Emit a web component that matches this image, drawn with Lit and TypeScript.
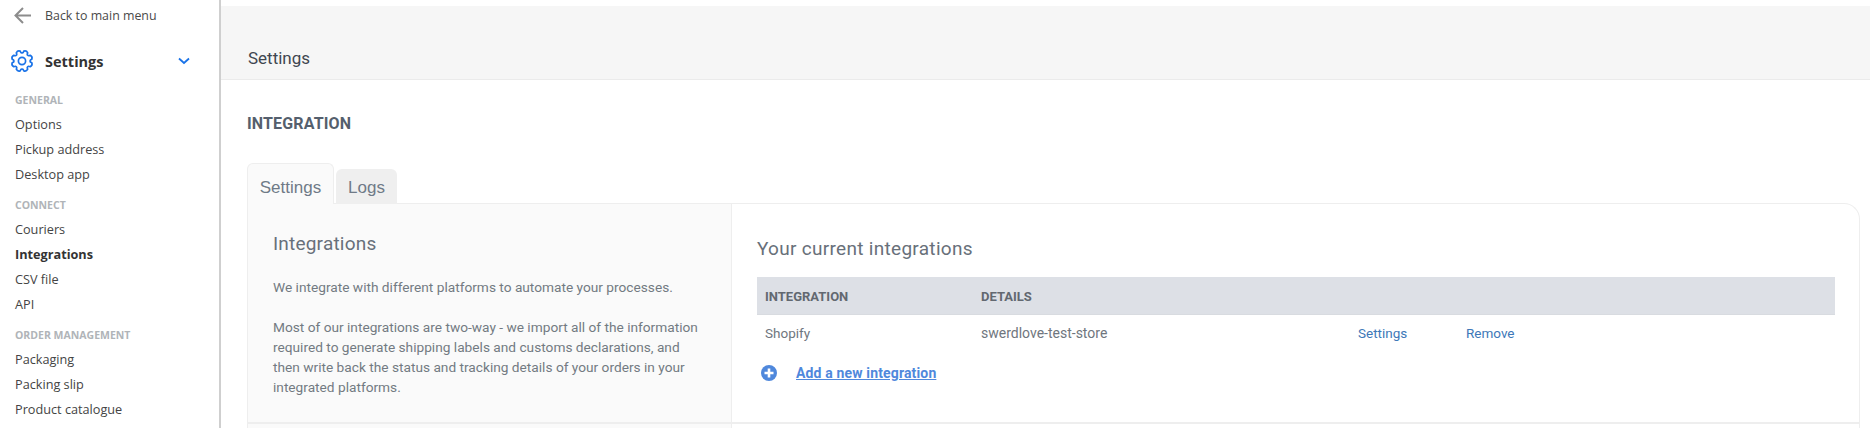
import { LitElement, html, css, svg } from "lit";
import { customElement } from "lit/decorators.js";

const groups = [
  { title: "GENERAL", items: ["Options", "Pickup address", "Desktop app"] },
  { title: "CONNECT", items: ["Couriers", "Integrations", "CSV file", "API"] },
  { title: "ORDER MANAGEMENT", items: ["Packaging", "Packing slip", "Product catalogue"] },
];

function gearPath(): string {
  const teeth = 8;
  const cx = 12, cy = 12, rOut = 11, rIn = 8.2;
  const pt = (r: number, a: number) => `${(cx + r * Math.cos(a)).toFixed(2)} ${(cy + r * Math.sin(a)).toFixed(2)}`;
  const step = (Math.PI * 2) / teeth;
  let d = "";
  for (let i = 0; i < teeth; i++) {
    const a = i * step + step / 2 - Math.PI / 2;
    const w = step * 0.27;
    const valleyStart = a - step / 2;
    if (i === 0) d += `M${pt(rIn, valleyStart)}`;
    d += ` Q${pt(rIn - 0.3, a - w * 1.2)} ${pt(rOut - 1, a - w)}`;
    d += ` Q${pt(rOut + 0.6, a)} ${pt(rOut - 1, a + w)}`;
    d += ` Q${pt(rIn - 0.3, a + w * 1.2)} ${pt(rIn, a + step / 2)}`;
  }
  return d + "Z";
}

@customElement("app-root")
export class AppRoot extends LitElement {
  static styles = css`
    :host { display: block; width: 1870px; height: 428px; overflow: hidden; background: #fff; }
    .page { display: flex; height: 428px; overflow: hidden; }
    .side { width: 219px; flex: none; border-right: 2px solid #cfcfcf; font-family: "Open Sans", "Noto Sans", sans-serif; color: #3c3c3c; box-sizing: content-box; }
    .back { display: flex; align-items: center; height: 30px; padding-left: 14px; gap: 14px; font-size: 12.4px; color: #4a4a4a; }
    .head { display: flex; align-items: center; height: 30px; margin-top: 16px; padding-left: 10px; font-size: 14.5px; font-weight: 700; color: #333; }
    .head span { margin-left: 11px; flex: 1; }
    .chev { margin-right: 29px; }
    .groups { padding: 16px 0 0 15px; }
    .group { margin-bottom: 10px; }
    .gt { font-size: 10.5px; font-weight: 700; color: #b0b4b8; height: 16px; line-height: 16px; margin-bottom: 4px; }
    .it { font-size: 12.7px; height: 25px; line-height: 25px; color: #444; }
    .it.on { font-weight: 700; color: #333; }
    .main { flex: 1; min-width: 0; font-family: "Roboto", sans-serif; color: #68707a; }
    .top { margin-top: 6px; height: 74px; box-sizing: border-box; background: #f6f6f6; border-bottom: 1px solid #ebebeb; padding: 41px 0 0 27px; font-size: 17px; line-height: 22px; color: #3f4650; }
    .body { padding: 34px 10px 0 26px; }
    h1 { margin: 0; font-size: 16px; line-height: 20px; font-weight: 700; color: #555f6d; letter-spacing: .15px; }
    .tabs { display: flex; align-items: flex-end; gap: 2px; margin-top: 30px; height: 40px; position: relative; z-index: 1; margin-bottom: -1px; }
    .tab { font-family: "Liberation Sans", sans-serif; font-size: 17px; color: #6f7a87; display: flex; align-items: center; justify-content: center; box-sizing: border-box; border-radius: 6px 6px 0 0; }
    .tab.a { width: 87px; height: 41px; padding-top: 7px; background: #fafafa; border: 1px solid #eeeeee; border-bottom: none; }
    .tab.b { width: 61px; height: 35px; padding-top: 2px; background: #efefef; }
    .panel { height: 240px; box-sizing: border-box; border: 1px solid #eeeeee; border-bottom: none; border-radius: 0 16px 0 0; overflow: hidden; }
    .sec { display: flex; height: 220px; box-sizing: border-box; border-bottom: 2px solid #eeeeee; }
    .sec.next { height: 20px; border-bottom: none; }
    .left { width: 484px; flex: none; box-sizing: border-box; background: #fafafa; border-right: 1px solid #eeeeee; padding: 28px 32px 0 25px; }
    h2 { margin: 0; font-size: 19px; line-height: 24px; font-weight: 400; color: #68707a; letter-spacing: .2px; }
    .left p { margin: 0; font-size: 13.7px; line-height: 20px; color: #737a82; }
    .p1 { padding-top: 21px; }
    .p2 { padding-top: 20px; }
    .right { flex: 1; min-width: 0; padding: 33px 24px 0 25px; }
    .right h2 { margin-bottom: 16px; letter-spacing: .3px; }
    .row { display: grid; grid-template-columns: 216px 377px 108px 1fr; align-items: center; padding-left: 8px; font-size: 13.5px; }
    .row.h { height: 38px; padding-top: 1px; background: #dde0e6; font-size: 13px; font-weight: 700; color: #626870; border-bottom: 1px solid #d8dbe0; box-sizing: border-box; }
    .row.d { height: 35px; color: #6f767e; }
    .details { font-size: 14px; }
    .row a { color: #3d78b8; }
    .add { display: flex; align-items: center; margin-top: 14px; padding-left: 3px; gap: 18px; }
    .add a { font-size: 14px; letter-spacing: .15px; font-weight: 700; color: #4f88dc; text-decoration: underline; }
  `;

  render() {
    return html`<div class="page">
      <nav class="side">
        <div class="back">
          <svg width="17" height="17" viewBox="0 0 17 17" fill="none" stroke="#8c8c8c" stroke-width="2">${svg`<path d="M17 8.500H1.500M9 1L1.500 8.500L9 16"/>`}</svg>
          <span>Back to main menu</span>
        </div>
        <div class="head">
          <svg width="24" height="24" viewBox="0 0 24 24" fill="none" stroke="#1a73e8" stroke-width="1.7" stroke-linejoin="round">${svg`<circle cx="12" cy="12" r="3.6"/><path d=${gearPath()}/>`}</svg>
          <span>Settings</span>
          <svg class="chev" width="12" height="8" viewBox="0 0 12 8" fill="none" stroke="#1a73e8" stroke-width="1.8">${svg`<path d="M1 1.500l5 4.500 5-4.500"/>`}</svg>
        </div>
        <div class="groups">
          ${groups.map((g) => html`<div class="group">
            <div class="gt">${g.title}</div>
            ${g.items.map((i) => html`<div class="it ${i === "Integrations" ? "on" : ""}">${i}</div>`)}
          </div>`)}
        </div>
      </nav>
      <main class="main">
        <div class="top">Settings</div>
        <div class="body">
          <h1>INTEGRATION</h1>
          <div class="tabs"><div class="tab a">Settings</div><div class="tab b">Logs</div></div>
          <div class="panel">
            <div class="sec">
              <section class="left">
                <h2>Integrations</h2>
                <p class="p1">We integrate with different platforms to automate your processes.</p>
                <p class="p2">Most of our integrations are two-way - we import all of the information required to generate shipping labels and customs declarations, and then write back the status and tracking details of your orders in your integrated platforms.</p>
              </section>
              <section class="right">
                <h2>Your current integrations</h2>
                <div class="row h"><span>INTEGRATION</span><span>DETAILS</span></div>
                <div class="row d"><span>Shopify</span><span class="details">swerdlove-test-store</span><a>Settings</a><a>Remove</a></div>
                <div class="add">
                  <svg width="18" height="18" viewBox="0 0 18 18">${svg`<circle cx="9" cy="9" r="8" fill="#4f88dc"/><path d="M9 4.500v9M4.500 9h9" stroke="#fff" stroke-width="2.600"/>`}</svg>
                  <a>Add a new integration</a>
                </div>
              </section>
            </div>
            <div class="sec next"><div class="left"></div></div>
          </div>
        </div>
      </main>
    </div>`;
  }
}
